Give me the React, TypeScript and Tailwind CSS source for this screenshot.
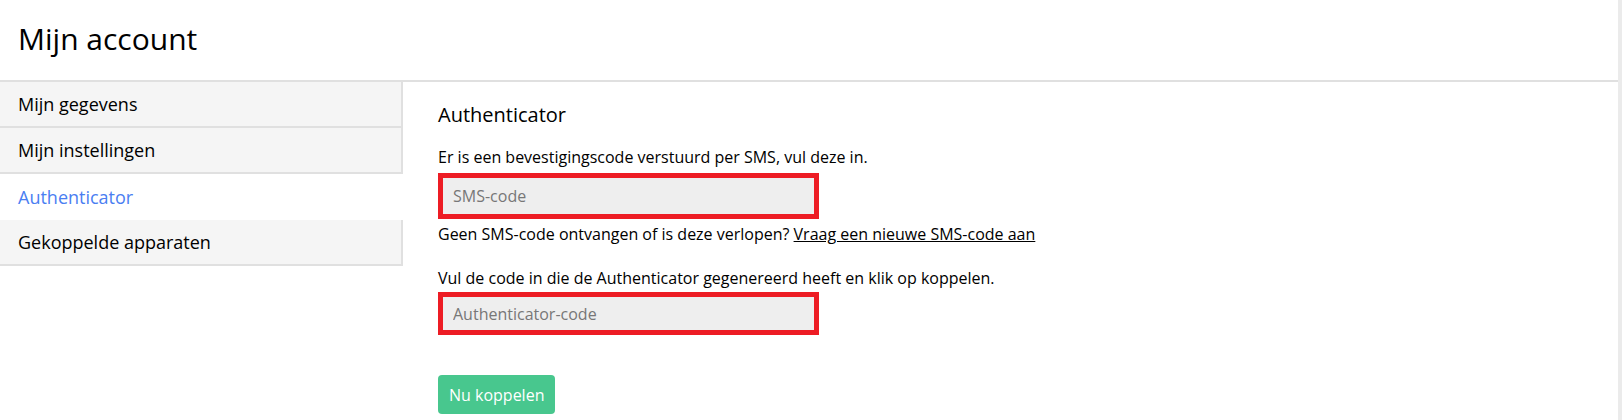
import { useState } from 'react';

const menu = ['Mijn gegevens', 'Mijn instellingen', 'Authenticator', 'Gekoppelde apparaten'];

export default function App() {
  const [active, setActive] = useState('Authenticator');
  const [sms, setSms] = useState('');
  const [code, setCode] = useState('');

  return (
    <div
      className="min-h-[420px] w-full bg-white text-black border-r-4 border-[#ebebeb]"
      style={{ fontFamily: '"Open Sans", "Noto Sans", sans-serif' }}
    >
      <header className="h-[82px] border-b-2 border-[#e0e0e0] flex items-center pl-[18px]">
        <h1 className="text-[30px] leading-[40px] font-normal pb-[2px]">Mijn account</h1>
      </header>

      <div className="flex">
        <nav className="w-[403px] shrink-0">
          {menu.map((item) => {
            const isActive = item === active;
            return (
              <button
                key={item}
                onClick={() => setActive(item)}
                className={
                  isActive
                    ? 'block w-full h-[46px] pl-[18px] text-left text-[18px] text-[#4a7ef2] bg-white'
                    : 'block w-full h-[46px] pl-[18px] text-left text-[18px] bg-[#f5f5f5] border-b-2 border-r-2 border-[#e0e0e0]'
                }
              >
                {item}
              </button>
            );
          })}
        </nav>

        <main className="flex-1 pl-[35px] pt-[19px]">
          <h2 className="text-[20px] leading-[28px] font-normal">Authenticator</h2>

          <p className="mt-[16px] text-[16px] leading-[24px]">
            Er is een bevestigingscode verstuurd per SMS, vul deze in.
          </p>
          <input
            value={sms}
            onChange={(e) => setSms(e.target.value)}
            placeholder="SMS-code"
            className="mt-[4px] block w-[381px] h-[46px] border-[5px] border-[#ed1c24] bg-[#eeeeee] pl-[10px] text-[16px] placeholder:text-[#777777] outline-none"
          />
          <p className="mt-[3px] text-[16px] leading-[24px]">
            Geen SMS-code ontvangen of is deze verlopen?{' '}
            <a href="#" className="underline">Vraag een nieuwe SMS-code aan</a>
          </p>

          <p className="mt-[20px] text-[16px] leading-[24px]">
            Vul de code in die de Authenticator gegenereerd heeft en klik op koppelen.
          </p>
          <input
            value={code}
            onChange={(e) => setCode(e.target.value)}
            placeholder="Authenticator-code"
            className="mt-[2px] block w-[381px] h-[43px] border-[5px] border-[#ed1c24] bg-[#eeeeee] pl-[10px] text-[16px] placeholder:text-[#777777] outline-none"
          />

          <button className="mt-[40px] h-[39px] px-[11px] rounded-[4px] bg-[#48c78e] text-white text-[16px] font-medium">
            Nu koppelen
          </button>
        </main>
      </div>
    </div>
  );
}
